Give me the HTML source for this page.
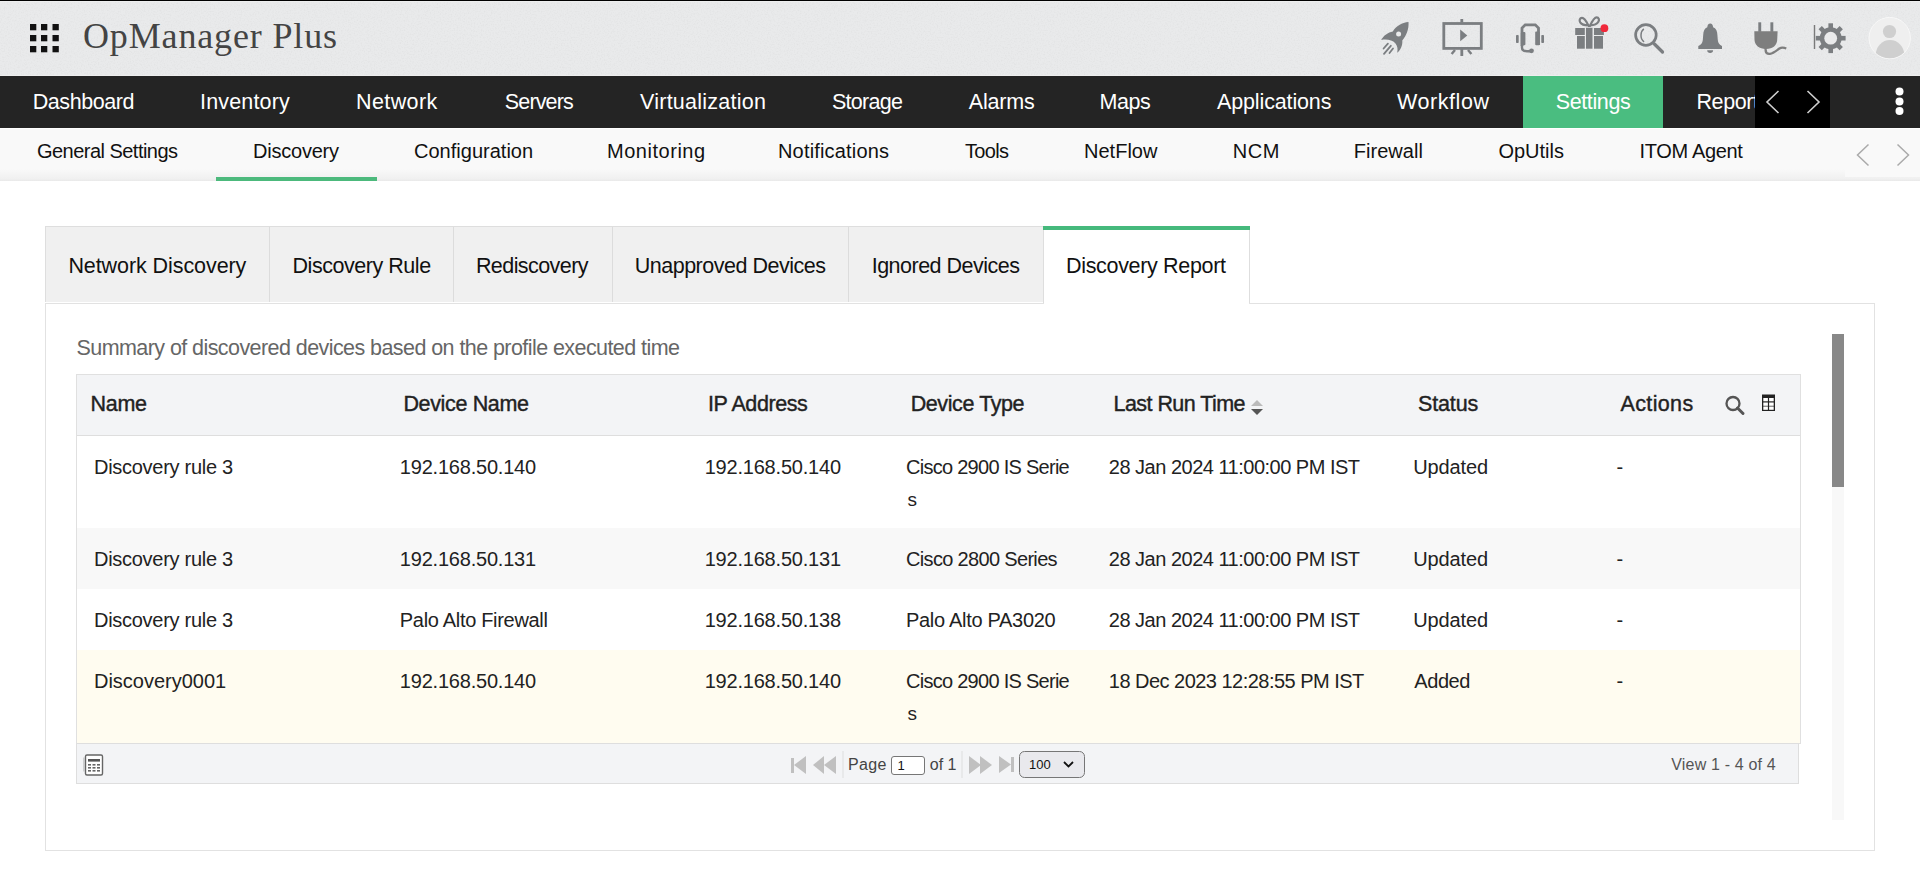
<!DOCTYPE html>
<html><head><meta charset="utf-8"><title>OpManager Plus - Discovery Report</title>
<style>
html,body{margin:0;padding:0;}
body{width:1920px;height:892px;overflow:hidden;position:relative;background:#fff;font-family:"Liberation Sans",sans-serif;}
.a{position:absolute;box-sizing:border-box;}
.t{position:absolute;white-space:nowrap;}
svg{position:absolute;overflow:visible;}
</style></head><body>
<!-- header -->
<div class="a" style="left:0;top:0;width:1920px;height:76px;background:#e9eaeb;"></div>
<svg style="left:0;top:0" width="1920" height="76"><filter id="nz" x="0" y="0" width="100%" height="100%"><feTurbulence type="fractalNoise" baseFrequency="0.7" numOctaves="2" seed="3"/><feColorMatrix type="matrix" values="0 0 0 0 0.5  0 0 0 0 0.5  0 0 0 0 0.5  0 0 0 -0.9 0.5"/></filter><rect width="1920" height="76" filter="url(#nz)" opacity="0.4"/></svg>
<div class="a" style="left:0;top:0;width:1920px;height:1px;background:#000;"></div>
<div class="a" style="left:0;top:1px;width:1920px;height:1px;background:#eeefef;"></div>
<div class="a" style="left:0;top:75px;width:1920px;height:1px;background:#eeeeee;"></div>
<!-- grid icon -->
<svg style="left:0;top:0" width="80" height="76">
 <g fill="#111">
  <rect x="30" y="24" width="6.3" height="6.3"/><rect x="41" y="24" width="6.3" height="6.3"/><rect x="52.5" y="24" width="6.3" height="6.3"/>
  <rect x="30" y="35" width="6.3" height="6.3"/><rect x="41" y="35" width="6.3" height="6.3"/><rect x="52.5" y="35" width="6.3" height="6.3"/>
  <rect x="30" y="46" width="6.3" height="6.3"/><rect x="41" y="46" width="6.3" height="6.3"/><rect x="52.5" y="46" width="6.3" height="6.3"/>
 </g>
</svg>
<!-- header icons -->
<svg style="left:0;top:0" width="1920" height="76">
 <g fill="#7b7e81" stroke="none">
  <!-- rocket -->
  <path d="M1408.5 22 C1402 22.5 1396 26 1392.8 31.5 C1388 32.5 1383.5 35.5 1381.2 40 C1386.5 38.8 1392.5 40 1395.3 43.2 C1397.6 46 1398 49.5 1397.2 52.8 C1400.5 50 1402.8 45.5 1402.3 40.5 C1406.5 35.5 1409 29 1408.5 22 Z"/>
  <circle cx="1398.6" cy="33.9" r="2.5" fill="#e9eaeb"/>
  <g stroke="#7b7e81" stroke-width="1.8" stroke-linecap="round">
   <path d="M1383.6 48.5 L1387.9 43.6"/>
   <path d="M1384 53.9 L1390.8 45.8"/>
   <path d="M1389.5 53 L1393 48.5"/>
  </g>
  <!-- presentation -->
  <rect x="1443.8" y="23.5" width="37.5" height="24.9" fill="none" stroke="#7b7e81" stroke-width="2.8"/>
  <rect x="1460.4" y="19" width="2.8" height="3.5"/>
  <rect x="1460.4" y="49" width="2.8" height="7"/>
  <g stroke="#7b7e81" stroke-width="2.4"><path d="M1455 50 L1451.6 54"/><path d="M1468 50 L1471.4 54"/></g>
  <path d="M1460.2 29.6 L1467.3 35.4 L1460.2 41.2 Z"/>
  <!-- headset -->
  <path d="M1522 46 L1522 28 L1525.2 24.8 L1535.3 24.8 L1538.5 28 L1538.5 45" fill="none" stroke="#7b7e81" stroke-width="2.8"/>
  <rect x="1520.8" y="32" width="4.6" height="13.2" rx="1"/>
  <rect x="1535.2" y="31.5" width="4.6" height="13.8" rx="1"/>
  <rect x="1516" y="35" width="2.7" height="8" rx="0.8"/>
  <rect x="1541.3" y="35" width="2.7" height="8" rx="0.8"/>
  <path d="M1522 45 L1522 47.5 C1522 50 1524 51.3 1527 51.3 L1531 51.3" fill="none" stroke="#7b7e81" stroke-width="2.4"/>
  <circle cx="1531.5" cy="50.8" r="2.4"/>
  <!-- gift -->
  <rect x="1575.2" y="28" width="9.6" height="7"/><rect x="1586" y="27.8" width="6.5" height="20.9"/><rect x="1594" y="28" width="9.9" height="7"/>
  <rect x="1577" y="36" width="7.8" height="12.7"/><rect x="1594" y="36" width="9" height="12.7"/>
  <path d="M1588.3 25.3 C1586.5 21.5 1584.5 17.8 1582 17.8 C1579.8 17.8 1579 20.3 1580.2 22.3 C1581.6 24.5 1585 25.3 1588.3 25.3 Z" fill="none" stroke="#7b7e81" stroke-width="2.2" stroke-linejoin="round"/>
  <path d="M1590.2 25.3 C1592 21.5 1594 17.3 1596.6 17.3 C1598.8 17.3 1599.6 19.8 1598.4 21.8 C1597 24.2 1593.5 25.3 1590.2 25.3 Z" fill="none" stroke="#7b7e81" stroke-width="2.2" stroke-linejoin="round"/>
  <rect x="1588" y="25" width="2.8" height="2"/>
  <circle cx="1604.4" cy="28.2" r="3.9" fill="#f0283a"/>
  <!-- search -->
  <circle cx="1645.9" cy="35" r="10.3" fill="none" stroke="#7b7e81" stroke-width="2.7"/>
  <path d="M1643.9 28.8 C1640.5 31 1639.5 39 1644.1 41.8" fill="none" stroke="#7b7e81" stroke-width="1.5"/>
  <path d="M1654.4 44 L1662.5 52" stroke="#7b7e81" stroke-width="3.3" stroke-linecap="round"/>
  <!-- bell -->
  <path d="M1710.2 23.4 C1712 23.4 1713 24.8 1713.1 27.3 C1716 28.3 1717.3 31 1717.4 35 L1717.8 40 C1718 43 1719.5 45 1722 46 L1722 49 L1698.3 49 L1698.3 46 C1701 45 1702.5 43 1702.8 40 L1703.2 35 C1703.4 31 1704.6 28.3 1707.3 27.3 C1707.4 24.8 1708.5 23.4 1710.2 23.4 Z"/>
  <path d="M1707.2 50.3 L1713.1 50.3 C1713.1 52 1712 53 1710.2 53 C1708.3 53 1707.2 52 1707.2 50.3 Z"/>
  <!-- plug -->
  <rect x="1758.3" y="22.3" width="2.9" height="9.5"/><rect x="1770.4" y="22.3" width="2.9" height="9.5"/>
  <path d="M1754.3 31.2 L1777.6 31.2 L1777.2 40 C1777 45 1773 49 1766 49 C1759 49 1754.8 45 1754.5 40 Z" fill="#7e7e7e"/>
  <path d="M1765.5 48 L1765.7 51 C1766 53 1768 54 1770 53.8 C1773 53.5 1776 51 1779 48.8 C1781 47.5 1784 47.5 1786.3 48.5" fill="none" stroke="#7e7e7e" stroke-width="2.3"/>
  <!-- divider -->
  <rect x="1813.8" y="25" width="1.4" height="24" fill="#7a7a7a"/>
  <!-- gear -->
  <g transform="translate(1830.7,38.2)">
   <rect x="-2.3" y="-14.9" width="4.6" height="6" transform="rotate(0)"/><rect x="-2.3" y="-14.9" width="4.6" height="6" transform="rotate(45)"/><rect x="-2.3" y="-14.9" width="4.6" height="6" transform="rotate(90)"/><rect x="-2.3" y="-14.9" width="4.6" height="6" transform="rotate(135)"/><rect x="-2.3" y="-14.9" width="4.6" height="6" transform="rotate(180)"/><rect x="-2.3" y="-14.9" width="4.6" height="6" transform="rotate(225)"/><rect x="-2.3" y="-14.9" width="4.6" height="6" transform="rotate(270)"/><rect x="-2.3" y="-14.9" width="4.6" height="6" transform="rotate(315)"/>
   <circle cx="0" cy="0" r="11"/>
   <circle cx="0" cy="0" r="6.4" fill="#e9eaeb"/>
  </g>
 </g>
 <!-- avatar -->
 <circle cx="1889.7" cy="38.1" r="20.7" fill="#efefef" stroke="#f8f8f8" stroke-width="1"/>
 <clipPath id="av"><circle cx="1889.7" cy="38.1" r="20.2"/></clipPath>
 <g fill="#cfcfcf" clip-path="url(#av)">
  <circle cx="1889.5" cy="31.5" r="6.6"/>
  <ellipse cx="1890" cy="55" rx="14.3" ry="15"/>
 </g>
</svg>

<!-- nav -->
<div class="a" style="left:0;top:76px;width:1920px;height:52px;background:#242424;"></div>
<div class="a" style="left:1523px;top:76px;width:140px;height:52px;background:#4abd80;"></div>
<div class="a" style="left:0;top:128px;width:1920px;height:1px;background:#fff;"></div>
<!-- subnav -->
<div class="a" style="left:0;top:129px;width:1920px;height:52px;background:linear-gradient(#f9f9f9 0,#f9f9f9 40px,#f0f0f0 50px,#e9e9e9 52px);"></div>
<div class="a" style="left:216px;top:177px;width:161px;height:4px;background:#4cb97c;"></div>
<div class="a" style="left:1845px;top:129px;width:75px;height:48px;background:#f9f9f9;"></div>
<!-- tabs -->
<div class="a" style="left:45px;top:226px;width:999px;height:77px;background:#f0f0f0;border:1px solid #dedede;border-bottom:none;"></div>
<div class="a" style="left:269px;top:227px;width:1px;height:75px;background:#dcdcdc;"></div>
<div class="a" style="left:453px;top:227px;width:1px;height:75px;background:#dcdcdc;"></div>
<div class="a" style="left:612px;top:227px;width:1px;height:75px;background:#dcdcdc;"></div>
<div class="a" style="left:848px;top:227px;width:1px;height:75px;background:#dcdcdc;"></div>
<!-- content box -->
<div class="a" style="left:45px;top:303px;width:1830px;height:548px;border:1px solid #e2e2e2;background:#fff;"></div>
<div class="a" style="left:45px;top:302px;width:999px;height:1px;background:#fff;"></div>
<!-- active tab -->
<div class="a" style="left:1043px;top:226px;width:207px;height:77px;background:#fff;border-left:1px solid #dedede;border-right:1px solid #dedede;"></div>
<div class="a" style="left:1044px;top:303px;width:205px;height:1px;background:#fff;"></div>
<div class="a" style="left:1043px;top:226px;width:207px;height:4px;background:#45b97c;"></div>
<!-- table -->
<div class="a" style="left:76px;top:374px;width:1725px;height:370px;border:1px solid #e0e0e0;background:#fff;"></div>
<div class="a" style="left:77px;top:375px;width:1723px;height:60px;background:#f3f4f6;"></div>
<div class="a" style="left:77px;top:435px;width:1723px;height:1px;background:#dedede;"></div>
<div class="a" style="left:77px;top:528px;width:1723px;height:61px;background:#f8f8f8;"></div>
<div class="a" style="left:77px;top:650px;width:1723px;height:93px;background:#fffcf0;"></div>
<!-- footer -->
<div class="a" style="left:76px;top:743px;width:1723px;height:41px;background:#f3f4f6;border:1px solid #dedede;"></div>
<!-- scrollbar -->
<div class="a" style="left:1832px;top:334px;width:12px;height:486px;background:#f8f8f8;"></div>
<div class="a" style="left:1832px;top:334px;width:12px;height:153px;background:#888;"></div>
<!-- table icons -->
<svg style="left:0;top:0" width="1920" height="892">
 <path d="M1251 406 L1257 400 L1263 406 Z" fill="#bbb"/>
 <path d="M1251 409 L1263 409 L1257 415 Z" fill="#555"/>
 <circle cx="1733" cy="403.5" r="6.5" fill="none" stroke="#555" stroke-width="2.3"/>
 <path d="M1737.5 408 L1743 413.5" stroke="#555" stroke-width="3" stroke-linecap="round"/>
 <rect x="1762" y="394.5" width="13" height="16.5" fill="#222"/>
 <rect x="1763.3" y="398" width="4.6" height="3.3" fill="#fff"/><rect x="1769.1" y="398" width="4.6" height="3.3" fill="#fff"/>
 <rect x="1763.3" y="402.5" width="4.6" height="3.3" fill="#fff"/><rect x="1769.1" y="402.5" width="4.6" height="3.3" fill="#fff"/>
 <rect x="1763.3" y="406.5" width="4.6" height="3.3" fill="#fff"/><rect x="1769.1" y="406.5" width="4.6" height="3.3" fill="#fff"/>
 <!-- calculator -->
 <rect x="85.5" y="755" width="17" height="20" rx="1.5" fill="#fff" stroke="#666" stroke-width="1.4"/>
 <rect x="83.5" y="757.5" width="0.8" height="14" fill="#aaa"/>
 <rect x="88" y="759" width="12" height="2.6" fill="#555"/>
 <g fill="#666">
  <rect x="88" y="764" width="3" height="1.6"/><rect x="92.5" y="764" width="3" height="1.6"/><rect x="97" y="764" width="3" height="1.6"/>
  <rect x="88" y="767" width="3" height="1.6"/><rect x="92.5" y="767" width="3" height="1.6"/><rect x="97" y="767" width="3" height="1.6"/>
  <rect x="88" y="770" width="3" height="1.6"/><rect x="92.5" y="770" width="3" height="1.6"/><rect x="97" y="770" width="3" height="1.6"/>
 </g>
 <!-- pager -->
 <g fill="#c0c0c0">
  <rect x="791" y="758" width="3" height="15"/><path d="M806 756 L806 774 L794 765 Z"/>
  <path d="M824 756 L824 774 L813 765 Z"/><path d="M836 756 L836 774 L824 765 Z"/>
  <path d="M969 756 L969 774 L981 765 Z"/><path d="M980 756 L980 774 L992 765 Z"/>
  <path d="M999 756 L999 773 L1011 764.5 Z"/><rect x="1011" y="757" width="3" height="15"/>
 </g>
 <rect x="842.5" y="751" width="1" height="27" fill="#dddddd"/>
 <rect x="961.5" y="751" width="1" height="27" fill="#dddddd"/>
 <rect x="891.5" y="756.5" width="33" height="18" rx="2.5" fill="#fff" stroke="#767676" stroke-width="1"/>
 <rect x="1019.5" y="751.5" width="65" height="26" rx="5" fill="#e9e9ed" stroke="#767676" stroke-width="1"/>
 <path d="M1064 762 L1068.5 766.5 L1073 762" fill="none" stroke="#111" stroke-width="1.8"/>
</svg>
<div class=t style="left:83.00px;top:18.00px;font:normal 36px/36px 'Liberation Serif';color:#444;letter-spacing:0.850px;">OpManager Plus</div>
<div class=t style="left:32.75px;top:92.00px;font:normal 21.5px/21.5px 'Liberation Sans';color:#fff;letter-spacing:-0.447px;">Dashboard</div>
<div class=t style="left:200.00px;top:92.00px;font:normal 21.5px/21.5px 'Liberation Sans';color:#fff;letter-spacing:0.164px;">Inventory</div>
<div class=t style="left:356.00px;top:92.00px;font:normal 21.5px/21.5px 'Liberation Sans';color:#fff;letter-spacing:0.400px;">Network</div>
<div class=t style="left:504.80px;top:92.00px;font:normal 21.5px/21.5px 'Liberation Sans';color:#fff;letter-spacing:-0.854px;">Servers</div>
<div class=t style="left:640.00px;top:92.00px;font:normal 21.5px/21.5px 'Liberation Sans';color:#fff;letter-spacing:0.250px;">Virtualization</div>
<div class=t style="left:832.00px;top:92.00px;font:normal 21.5px/21.5px 'Liberation Sans';color:#fff;letter-spacing:-0.724px;">Storage</div>
<div class=t style="left:968.75px;top:92.00px;font:normal 21.5px/21.5px 'Liberation Sans';color:#fff;letter-spacing:-0.199px;">Alarms</div>
<div class=t style="left:1099.50px;top:92.00px;font:normal 21.5px/21.5px 'Liberation Sans';color:#fff;letter-spacing:-0.441px;">Maps</div>
<div class=t style="left:1217.00px;top:92.00px;font:normal 21.5px/21.5px 'Liberation Sans';color:#fff;letter-spacing:-0.135px;">Applications</div>
<div class=t style="left:1397.00px;top:92.00px;font:normal 21.5px/21.5px 'Liberation Sans';color:#fff;letter-spacing:0.574px;">Workflow</div>
<div class=t style="left:1555.75px;top:92.00px;font:normal 21.5px/21.5px 'Liberation Sans';color:#fff;letter-spacing:-0.384px;">Settings</div>
<div class=t style="left:1696.50px;top:92.00px;font:normal 21.5px/21.5px 'Liberation Sans';color:#fff;letter-spacing:-0.412px;">Report</div>
<div class=t style="left:37.00px;top:141.00px;font:normal 20px/20px 'Liberation Sans';color:#111;letter-spacing:-0.532px;">General Settings</div>
<div class=t style="left:253.00px;top:141.00px;font:normal 20px/20px 'Liberation Sans';color:#111;letter-spacing:-0.224px;">Discovery</div>
<div class=t style="left:414.00px;top:141.00px;font:normal 20px/20px 'Liberation Sans';color:#111;letter-spacing:0.013px;">Configuration</div>
<div class=t style="left:607.00px;top:141.00px;font:normal 20px/20px 'Liberation Sans';color:#111;letter-spacing:0.527px;">Monitoring</div>
<div class=t style="left:778.00px;top:141.00px;font:normal 20px/20px 'Liberation Sans';color:#111;letter-spacing:0.172px;">Notifications</div>
<div class=t style="left:965.00px;top:141.00px;font:normal 20px/20px 'Liberation Sans';color:#111;letter-spacing:-0.672px;">Tools</div>
<div class=t style="left:1084.00px;top:141.00px;font:normal 20px/20px 'Liberation Sans';color:#111;letter-spacing:0.016px;">NetFlow</div>
<div class=t style="left:1232.75px;top:141.00px;font:normal 20px/20px 'Liberation Sans';color:#111;letter-spacing:0.557px;">NCM</div>
<div class=t style="left:1353.70px;top:141.00px;font:normal 20px/20px 'Liberation Sans';color:#111;letter-spacing:0.050px;">Firewall</div>
<div class=t style="left:1498.40px;top:141.00px;font:normal 20px/20px 'Liberation Sans';color:#111;letter-spacing:0.006px;">OpUtils</div>
<div class=t style="left:1639.60px;top:141.00px;font:normal 20px/20px 'Liberation Sans';color:#111;letter-spacing:-0.344px;">ITOM Agent</div>
<div class=t style="left:68.40px;top:255.70px;font:normal 21.5px/21.5px 'Liberation Sans';color:#111;letter-spacing:-0.078px;">Network Discovery</div>
<div class=t style="left:292.50px;top:255.70px;font:normal 21.5px/21.5px 'Liberation Sans';color:#111;letter-spacing:-0.455px;">Discovery Rule</div>
<div class=t style="left:475.90px;top:255.70px;font:normal 21.5px/21.5px 'Liberation Sans';color:#111;letter-spacing:-0.564px;">Rediscovery</div>
<div class=t style="left:634.70px;top:255.70px;font:normal 21.5px/21.5px 'Liberation Sans';color:#111;letter-spacing:-0.484px;">Unapproved Devices</div>
<div class=t style="left:871.70px;top:255.70px;font:normal 21.5px/21.5px 'Liberation Sans';color:#111;letter-spacing:-0.508px;">Ignored Devices</div>
<div class=t style="left:1066.00px;top:255.70px;font:normal 21.5px/21.5px 'Liberation Sans';color:#111;letter-spacing:-0.327px;">Discovery Report</div>
<div class=t style="left:76.50px;top:337.50px;font:normal 21.5px/21.5px 'Liberation Sans';color:#666;letter-spacing:-0.570px;">Summary of discovered devices based on the profile executed time</div>
<div class=t style="left:90.50px;top:394.00px;font:normal 21.5px/21.5px 'Liberation Sans';color:#222;letter-spacing:-0.298px;-webkit-text-stroke:0.4px #222">Name</div>
<div class=t style="left:403.40px;top:394.00px;font:normal 21.5px/21.5px 'Liberation Sans';color:#222;letter-spacing:-0.348px;-webkit-text-stroke:0.4px #222">Device Name</div>
<div class=t style="left:708.00px;top:394.00px;font:normal 21.5px/21.5px 'Liberation Sans';color:#222;letter-spacing:-0.423px;-webkit-text-stroke:0.4px #222">IP Address</div>
<div class=t style="left:910.70px;top:394.00px;font:normal 21.5px/21.5px 'Liberation Sans';color:#222;letter-spacing:-0.405px;-webkit-text-stroke:0.4px #222">Device Type</div>
<div class=t style="left:1113.50px;top:394.00px;font:normal 21.5px/21.5px 'Liberation Sans';color:#222;letter-spacing:-0.546px;-webkit-text-stroke:0.4px #222">Last Run Time</div>
<div class=t style="left:1418.00px;top:394.00px;font:normal 21.5px/21.5px 'Liberation Sans';color:#222;letter-spacing:-0.140px;-webkit-text-stroke:0.4px #222">Status</div>
<div class=t style="left:1620.50px;top:394.00px;font:normal 21.5px/21.5px 'Liberation Sans';color:#222;letter-spacing:0.358px;-webkit-text-stroke:0.4px #222">Actions</div>
<div class=t style="left:94.00px;top:457.00px;font:normal 20px/20px 'Liberation Sans';color:#222;letter-spacing:-0.284px;">Discovery rule 3</div>
<div class=t style="left:399.80px;top:457.00px;font:normal 20px/20px 'Liberation Sans';color:#222;letter-spacing:-0.208px;">192.168.50.140</div>
<div class=t style="left:704.70px;top:457.00px;font:normal 20px/20px 'Liberation Sans';color:#222;letter-spacing:-0.208px;">192.168.50.140</div>
<div class=t style="left:906.00px;top:457.00px;font:normal 20px/20px 'Liberation Sans';color:#222;letter-spacing:-0.724px;">Cisco 2900 IS Serie</div>
<div class=t style="left:1108.80px;top:457.00px;font:normal 20px/20px 'Liberation Sans';color:#222;letter-spacing:-0.501px;">28 Jan 2024 11:00:00 PM IST</div>
<div class=t style="left:1413.30px;top:457.00px;font:normal 20px/20px 'Liberation Sans';color:#222;letter-spacing:-0.132px;">Updated</div>
<div class=t style="left:1616.50px;top:457.00px;font:normal 20px/20px 'Liberation Sans';color:#222;letter-spacing:0.000px;">-</div>
<div class=t style="left:94.00px;top:549.00px;font:normal 20px/20px 'Liberation Sans';color:#222;letter-spacing:-0.284px;">Discovery rule 3</div>
<div class=t style="left:399.80px;top:549.00px;font:normal 20px/20px 'Liberation Sans';color:#222;letter-spacing:-0.208px;">192.168.50.131</div>
<div class=t style="left:704.70px;top:549.00px;font:normal 20px/20px 'Liberation Sans';color:#222;letter-spacing:-0.208px;">192.168.50.131</div>
<div class=t style="left:906.00px;top:549.00px;font:normal 20px/20px 'Liberation Sans';color:#222;letter-spacing:-0.669px;">Cisco 2800 Series</div>
<div class=t style="left:1108.80px;top:549.00px;font:normal 20px/20px 'Liberation Sans';color:#222;letter-spacing:-0.501px;">28 Jan 2024 11:00:00 PM IST</div>
<div class=t style="left:1413.30px;top:549.00px;font:normal 20px/20px 'Liberation Sans';color:#222;letter-spacing:-0.132px;">Updated</div>
<div class=t style="left:1616.50px;top:549.00px;font:normal 20px/20px 'Liberation Sans';color:#222;letter-spacing:0.000px;">-</div>
<div class=t style="left:94.00px;top:610.00px;font:normal 20px/20px 'Liberation Sans';color:#222;letter-spacing:-0.284px;">Discovery rule 3</div>
<div class=t style="left:399.80px;top:610.00px;font:normal 20px/20px 'Liberation Sans';color:#222;letter-spacing:-0.309px;">Palo Alto Firewall</div>
<div class=t style="left:704.70px;top:610.00px;font:normal 20px/20px 'Liberation Sans';color:#222;letter-spacing:-0.208px;">192.168.50.138</div>
<div class=t style="left:906.00px;top:610.00px;font:normal 20px/20px 'Liberation Sans';color:#222;letter-spacing:-0.298px;">Palo Alto PA3020</div>
<div class=t style="left:1108.80px;top:610.00px;font:normal 20px/20px 'Liberation Sans';color:#222;letter-spacing:-0.501px;">28 Jan 2024 11:00:00 PM IST</div>
<div class=t style="left:1413.30px;top:610.00px;font:normal 20px/20px 'Liberation Sans';color:#222;letter-spacing:-0.132px;">Updated</div>
<div class=t style="left:1616.50px;top:610.00px;font:normal 20px/20px 'Liberation Sans';color:#222;letter-spacing:0.000px;">-</div>
<div class=t style="left:94.00px;top:671.00px;font:normal 20px/20px 'Liberation Sans';color:#222;letter-spacing:-0.014px;">Discovery0001</div>
<div class=t style="left:399.80px;top:671.00px;font:normal 20px/20px 'Liberation Sans';color:#222;letter-spacing:-0.208px;">192.168.50.140</div>
<div class=t style="left:704.70px;top:671.00px;font:normal 20px/20px 'Liberation Sans';color:#222;letter-spacing:-0.208px;">192.168.50.140</div>
<div class=t style="left:906.00px;top:671.00px;font:normal 20px/20px 'Liberation Sans';color:#222;letter-spacing:-0.724px;">Cisco 2900 IS Serie</div>
<div class=t style="left:1108.80px;top:671.00px;font:normal 20px/20px 'Liberation Sans';color:#222;letter-spacing:-0.524px;">18 Dec 2023 12:28:55 PM IST</div>
<div class=t style="left:1414.30px;top:671.00px;font:normal 20px/20px 'Liberation Sans';color:#222;letter-spacing:-0.427px;">Added</div>
<div class=t style="left:1616.50px;top:671.00px;font:normal 20px/20px 'Liberation Sans';color:#222;letter-spacing:0.000px;">-</div>
<div class=t style="left:907.50px;top:490.00px;font:normal 19px/19px 'Liberation Sans';color:#222;letter-spacing:0.000px;">s</div>
<div class=t style="left:907.50px;top:704.00px;font:normal 19px/19px 'Liberation Sans';color:#222;letter-spacing:0.000px;">s</div>
<div class=t style="left:848.00px;top:757.00px;font:normal 16px/16px 'Liberation Sans';color:#444;letter-spacing:0.310px;">Page</div>
<div class=t style="left:929.80px;top:757.00px;font:normal 16px/16px 'Liberation Sans';color:#444;letter-spacing:0.000px;">of 1</div>
<div class=t style="left:1671.30px;top:756.80px;font:normal 16px/16px 'Liberation Sans';color:#555;letter-spacing:0.172px;">View 1 - 4 of 4</div>
<div class=t style="left:897.60px;top:759.00px;font:normal 13px/13px 'Liberation Sans';color:#111;letter-spacing:0.000px;">1</div>
<div class=t style="left:1029.00px;top:757.80px;font:normal 13px/13px 'Liberation Sans';color:#111;letter-spacing:0.000px;">100</div>
<!-- nav overflow block -->
<div class="a" style="left:1755px;top:76px;width:75px;height:52px;background:#000;"></div>
<svg style="left:0;top:0" width="1920" height="200">
 <path d="M1778.5 91 L1767 102 L1778.5 113" fill="none" stroke="#cfcfcf" stroke-width="1.6"/>
 <path d="M1807.5 91 L1819 102 L1807.5 113" fill="none" stroke="#cfcfcf" stroke-width="1.6"/>
 <circle cx="1899.5" cy="91.5" r="4" fill="#fff"/>
 <circle cx="1899.5" cy="101.5" r="4" fill="#fff"/>
 <circle cx="1899.5" cy="111" r="4" fill="#fff"/>
 <path d="M1868.5 144.5 L1857.5 155 L1868.5 165.5" fill="none" stroke="#aaa" stroke-width="1.5"/>
 <path d="M1897.5 144.5 L1908.5 155 L1897.5 165.5" fill="none" stroke="#aaa" stroke-width="1.5"/>
</svg>
</body></html>
